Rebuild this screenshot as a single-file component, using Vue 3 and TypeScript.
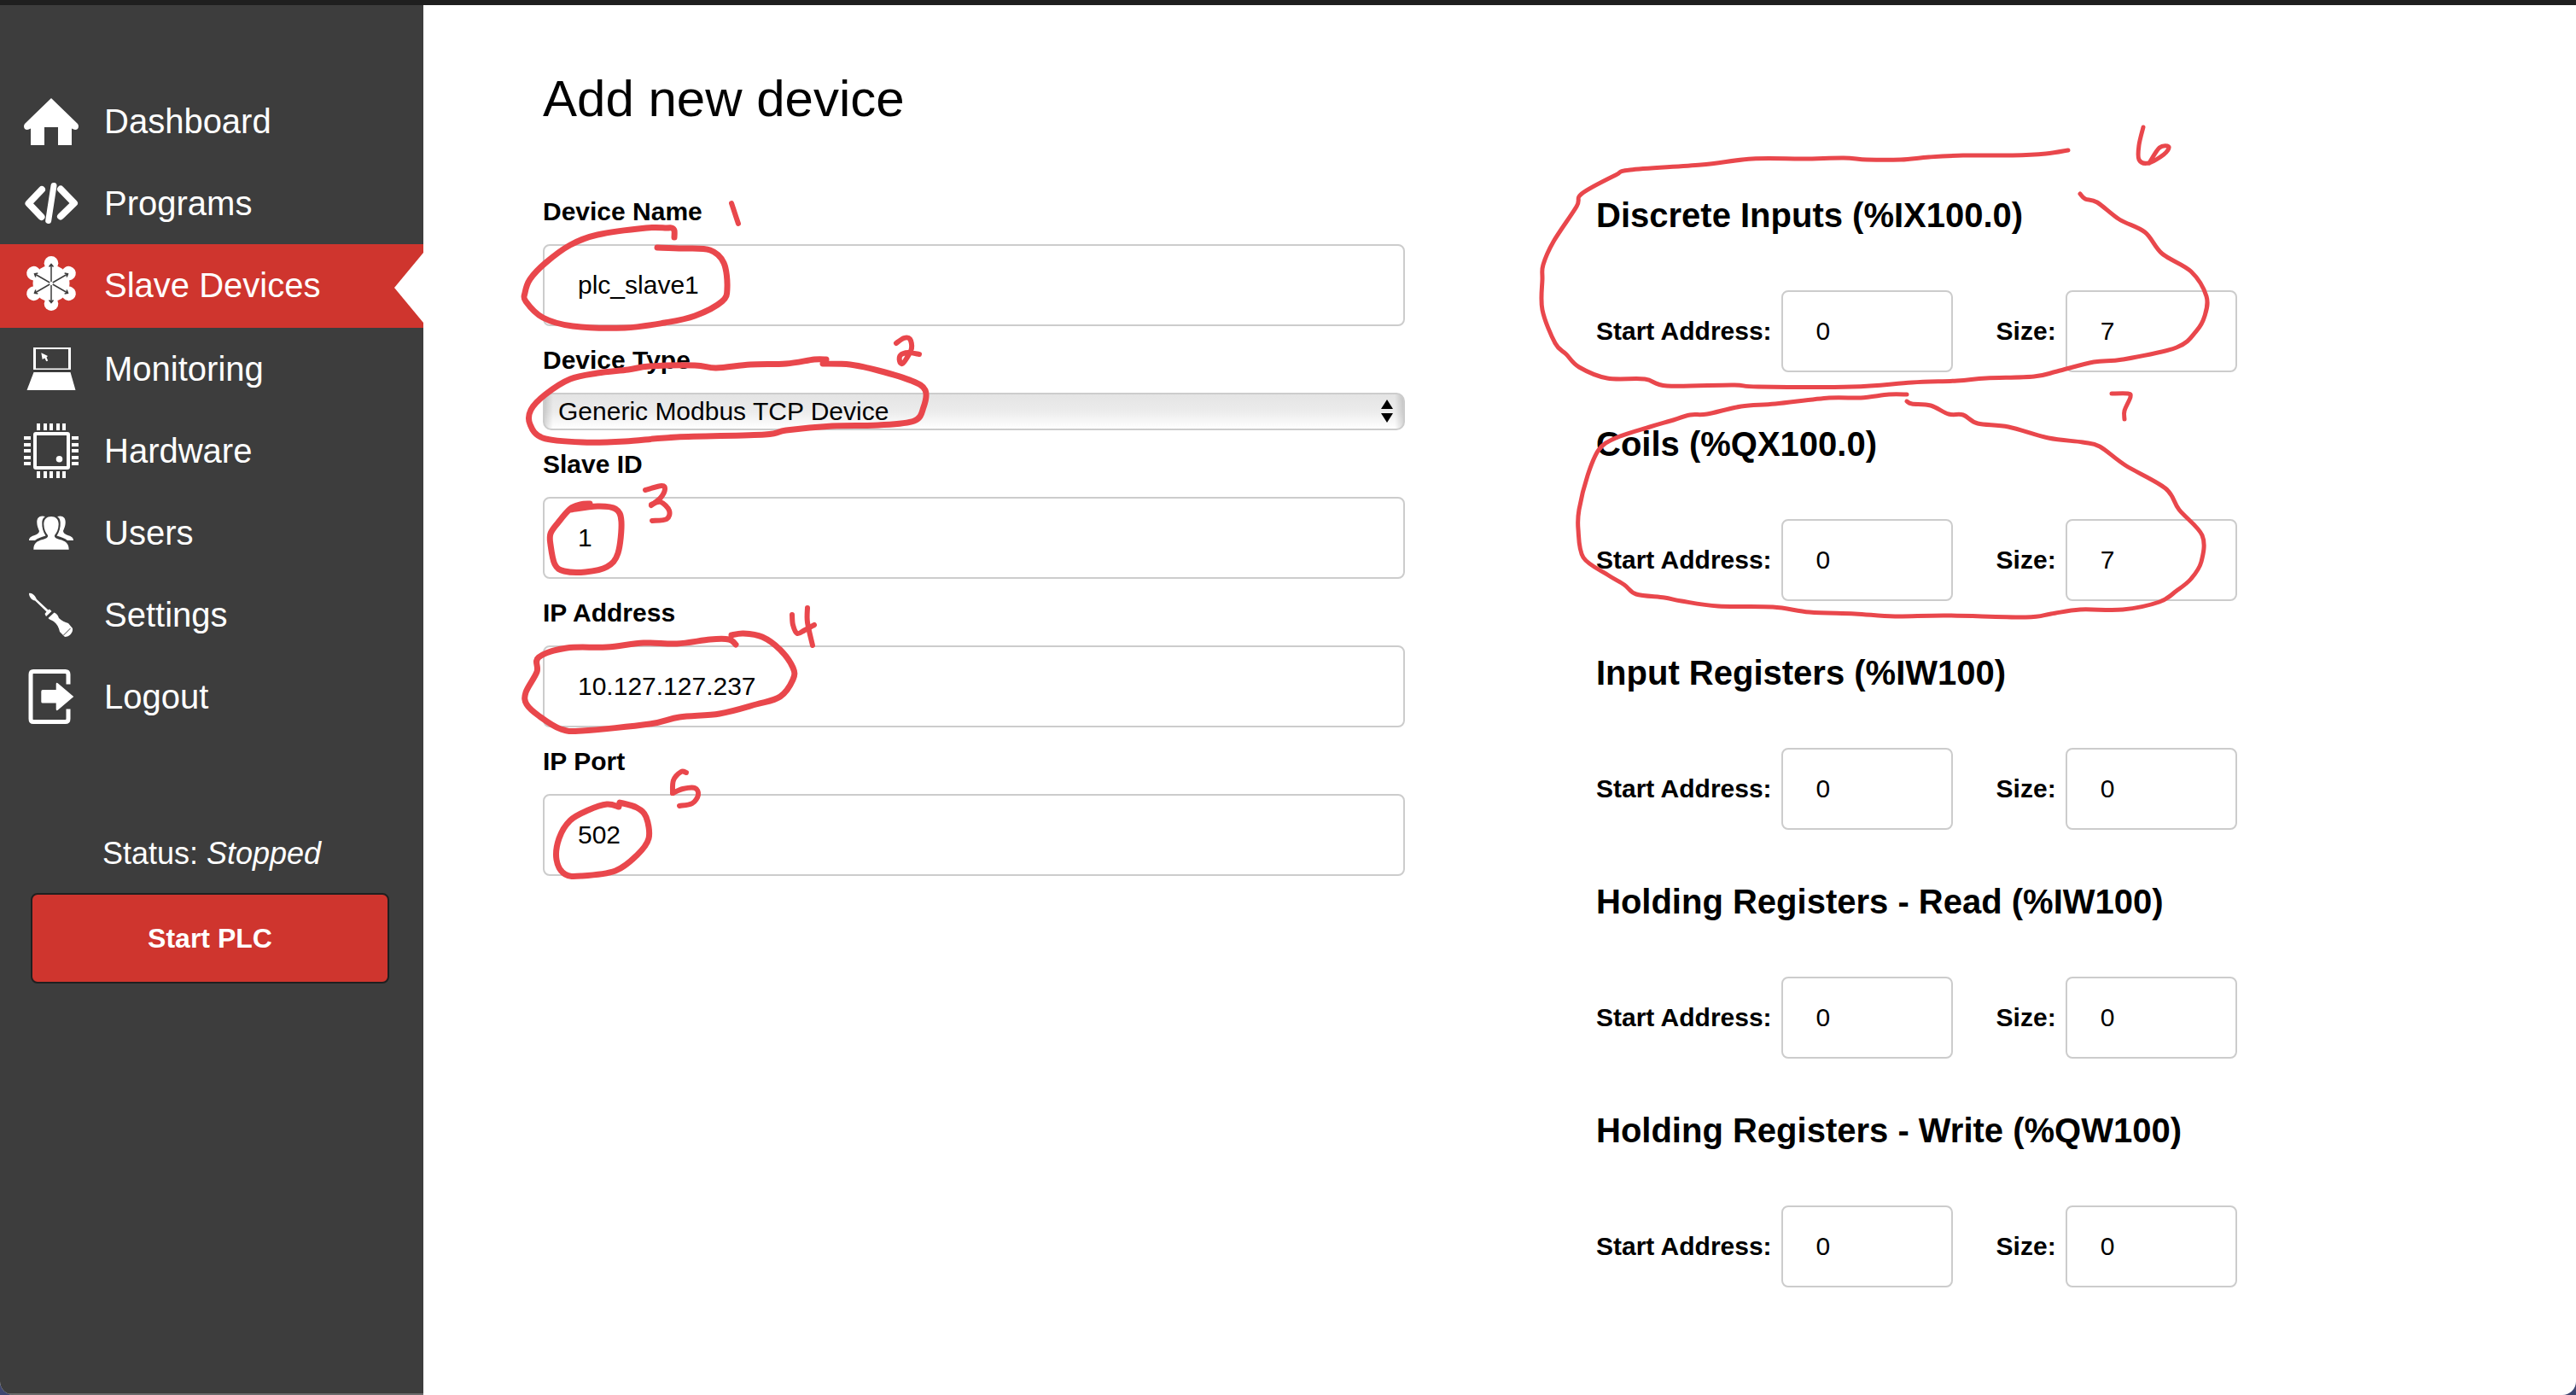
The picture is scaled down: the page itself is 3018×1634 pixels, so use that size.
<script setup lang="ts">
import { ref } from 'vue'

type Point = [number, number]

interface NavItem {
  icon: string
  label: string
}

interface RegisterBlock {
  id: string
  title: string
  start: string
  size: string
}

const navItems: NavItem[] = [
  { icon: 'home', label: 'Dashboard' },
  { icon: 'code', label: 'Programs' },
  { icon: 'hub', label: 'Slave Devices' },
  { icon: 'laptop', label: 'Monitoring' },
  { icon: 'chip', label: 'Hardware' },
  { icon: 'users', label: 'Users' },
  { icon: 'driver', label: 'Settings' },
  { icon: 'logout', label: 'Logout' },
]
const activeItem = 'Slave Devices'

const deviceName = ref('plc_slave1')
const deviceType = ref('Generic Modbus TCP Device')
const slaveId = ref('1')
const ipAddress = ref('10.127.127.237')
const ipPort = ref('502')

const registers = ref<RegisterBlock[]>([
  { id: 'di', title: 'Discrete Inputs (%IX100.0)', start: '0', size: '7' },
  { id: 'co', title: 'Coils (%QX100.0)', start: '0', size: '7' },
  { id: 'ir', title: 'Input Registers (%IW100)', start: '0', size: '0' },
  { id: 'hr', title: 'Holding Registers - Read (%IW100)', start: '0', size: '0' },
  { id: 'hw', title: 'Holding Registers - Write (%QW100)', start: '0', size: '0' },
])

const pinOffsets = [17, 25, 32, 40, 47]
const arrowAngles = [0, 60, 120, 180, 240, 300]

/** Turns pen samples into one smooth stroke (Catmull-Rom to cubic Bezier). */
function stroke(points: Point[]): string {
  let d = `M${points[0][0]} ${points[0][1]}`
  for (let i = 0; i < points.length - 1; i++) {
    const p0 = points[Math.max(i - 1, 0)]
    const p1 = points[i]
    const p2 = points[i + 1]
    const p3 = points[Math.min(i + 2, points.length - 1)]
    d += `C${p1[0] + (p2[0] - p0[0]) / 6} ${p1[1] + (p2[1] - p0[1]) / 6}`
    d += ` ${p2[0] - (p3[0] - p1[0]) / 6} ${p2[1] - (p3[1] - p1[1]) / 6}`
    d += ` ${p2[0]} ${p2[1]}`
  }
  return d
}

const fieldLoops: string[] = ([
  [[790, 278], [790, 270], [787, 267], [781, 267], [757, 267], [700, 275], [668, 287], [639, 308], [621, 327], [615, 343], [616, 353], [636, 372], [671, 382], [732, 384], [779, 378], [814, 370], [846, 353], [852, 337], [848, 308], [832, 293], [800, 291], [770, 290]],
  [[968, 421], [954, 421], [921, 426], [879, 427], [839, 431], [814, 428], [761, 429], [736, 433], [700, 437], [668, 444], [639, 462], [622, 480], [621, 497], [636, 513], [682, 518], [732, 517], [793, 512], [896, 509], [921, 504], [975, 499], [1029, 498], [1071, 493], [1082, 477], [1084, 457], [1068, 446], [1029, 434], [996, 427], [964, 426]],
  [[691, 590], [680, 591], [668, 596], [654, 612], [645, 625], [645, 638], [650, 661], [661, 669], [686, 670], [711, 664], [724, 648], [728, 611], [721, 596], [700, 593], [668, 597]],
  [[857, 744], [871, 742], [893, 746], [914, 761], [929, 782], [929, 796], [914, 816], [886, 825], [843, 836], [796, 840], [761, 848], [682, 856], [657, 854], [632, 839], [617, 825], [616, 811], [629, 787], [631, 770], [664, 759], [711, 758], [754, 753], [793, 754], [832, 749], [854, 749], [862, 755]],
  [[725, 945], [711, 942], [689, 949], [668, 961], [655, 982], [652, 1007], [662, 1024], [682, 1026], [721, 1020], [746, 1002], [760, 982], [757, 957], [746, 946], [726, 940]],
] as Point[][]).map(stroke)

const fieldMarks: string[] = ([
  [[857, 238], [861, 250], [865, 262]],
  [[1050, 402], [1059, 396], [1066, 397], [1068, 408], [1062, 420], [1057, 426], [1054, 423], [1055, 416], [1064, 413], [1077, 415]],
  [[756, 574], [775, 569], [779, 573], [774, 583], [763, 592]],
  [[763, 591], [774, 588], [784, 598], [781, 608], [764, 610]],
  [[928, 720], [929, 732], [934, 742], [943, 738], [954, 732]],
  [[946, 712], [946, 729], [952, 756]],
  [[804, 905], [798, 904], [789, 914], [788, 929]],
  [[788, 929], [800, 924], [814, 923], [818, 931], [811, 941], [796, 944]],
] as Point[][]).map(stroke)

const registerLoops: string[] = ([
  [[2423, 176], [2397, 180], [2358, 182], [2300, 182], [2260, 184], [2227, 187], [2187, 187], [2160, 185], [2113, 186], [2053, 186], [1993, 193], [1910, 199], [1893, 205], [1853, 227], [1847, 242], [1820, 283], [1808, 310], [1807, 327], [1807, 363], [1822, 402], [1835, 415], [1850, 430], [1883, 443], [1927, 444], [1953, 452], [2030, 451], [2060, 453], [2170, 453], [2240, 448], [2293, 446], [2327, 443], [2383, 441], [2410, 435], [2453, 424], [2487, 421], [2550, 407], [2573, 388], [2583, 370], [2585, 347], [2567, 318], [2533, 297], [2513, 272], [2483, 257], [2457, 237], [2443, 233], [2437, 227]],
  [[2234, 462], [2213, 462], [2180, 466], [2143, 466], [2080, 473], [2040, 476], [2000, 485], [1980, 486], [1957, 493], [1933, 500], [1893, 513], [1873, 527], [1860, 557], [1850, 597], [1849, 620], [1855, 653], [1883, 673], [1903, 685], [1917, 696], [1950, 700], [1970, 704], [2013, 710], [2077, 711], [2120, 717], [2173, 719], [2220, 722], [2280, 721], [2373, 723], [2403, 719], [2437, 714], [2487, 714], [2530, 705], [2550, 692], [2567, 678], [2579, 658], [2580, 627], [2553, 597], [2537, 572], [2490, 545], [2460, 523], [2440, 518], [2400, 513], [2353, 500], [2317, 496], [2300, 486], [2283, 485], [2262, 475], [2240, 473], [2234, 470]],
] as Point[][]).map(stroke)

const registerMarks: string[] = ([
  [[2511, 149], [2506, 170], [2506, 187], [2517, 191], [2535, 181], [2541, 172], [2530, 173], [2518, 191]],
  [[2474, 461], [2493, 461], [2496, 465], [2489, 481], [2489, 491]],
] as Point[][]).map(stroke)
</script>

<template>
  <div class="page">
    <aside class="sidebar">
      <nav class="nav">
        <a
          v-for="item in navItems"
          :key="item.label"
          href="#"
          class="nav-item"
          :class="{ active: item.label === activeItem }"
        >
          <svg class="nav-icon" viewBox="0 0 64 64" aria-hidden="true">
            <path
              v-if="item.icon === 'home'"
              fill="#fff"
              d="M32 5 63 35Q65 38 63 41Q60 43 56 40.500V60H40V39H24V60H8V40.500Q4 43 1 41Q-1 38 1 35Z"
            />
            <g v-else-if="item.icon === 'code'" class="line" stroke-width="8">
              <path d="M21 16 5.500 32.300 20.500 48" />
              <path stroke-width="7" d="M35 11.500 28.700 52.500" />
              <path d="M43 15.500 59 32 43 47.500" />
            </g>
            <g v-else-if="item.icon === 'hub'">
              <circle cx="32" cy="30" r="21.500" fill="#fff" />
              <g v-for="angle in arrowAngles" :key="angle" :transform="`rotate(${angle} 32 30)`">
                <circle cx="32" cy="6.300" r="8.300" fill="#fff" />
                <path d="M32 28V7M29.500 10.500 32 7.500 34.500 10.500" fill="none" stroke="#3d3d3d" stroke-width="1.500" />
              </g>
            </g>
            <g v-else-if="item.icon === 'laptop'" fill="#fff">
              <path fill-rule="evenodd" d="M11 7H55V33H11ZM14 9V31.500H52V9Z" />
              <path d="M11.500 36H54.500L60.500 57H3.500Z" />
              <path d="M20.300 13.300 28 17 26.500 18.500 28.200 22.500 26.300 23.300 24.300 19.500 21.700 21Z" />
            </g>
            <g v-else-if="item.icon === 'chip'" fill="#fff">
              <g v-for="pin in pinOffsets" :key="pin">
                <rect :x="pin - 2" y="0" width="4" height="8" />
                <rect :x="pin - 2" y="56" width="4" height="8" />
                <rect x="0" :y="pin - 2" width="8" height="4" />
                <rect x="56" :y="pin - 2" width="8" height="4" />
              </g>
              <rect x="13" y="12" width="39" height="40" rx="1" fill="none" stroke="#fff" stroke-width="4" />
              <circle cx="41.500" cy="41.700" r="3.800" />
            </g>
            <g v-else-if="item.icon === 'users'" fill="#fff">
              <path d="M11.300 51.700C11.300 44 16 41.500 22 40C26.500 38.500 28.500 37.500 28 35C25.500 32 23.500 28 23.300 22C23.300 16 27 13 32 13C37 13 40.700 16 40.700 22C40.500 28 38.500 32 36 35C35.500 37.500 37.500 38.500 42 40C48 41.500 52.700 44 52.700 51.700Z" />
              <path id="peer" d="M25 13C19 11 15 14 15.300 20C15.500 25 17 27 18 30C17.500 33 15 34 11 35.500C7 37 6 39 6 41H13C16 38.500 20 37.500 25.500 35.500C22.500 31 21 26 21.300 20C21.500 16 23 14.500 25 13Z" />
              <use href="#peer" transform="matrix(-1 0 0 1 64 0)" />
            </g>
            <g v-else-if="item.icon === 'driver'" fill="#fff">
              <path d="M6 7C9 6 13 9 15 14L28.500 26.500 30 25.500 32.500 28 26 34 24.500 31 26.500 28.500 13 15.500C9 15 6 11 6 7Z" />
              <path d="M35.500 29.500C39 31 40 33 41 36C44 39 48 41 52 42L57 48C58 53 53 58 48 58L42 52C41 47 39 43 35 40C32 38 30 38 28.500 36Z" />
              <path d="M46.500 56 54.500 48" fill="none" stroke="#3d3d3d" stroke-width="1" />
            </g>
            <g v-else>
              <path
                d="M52 17.500V6Q52 2.500 48.500 2.500H11Q8 2.500 8 6V58Q8 61.500 11 61.500H48.500Q52 61.500 52 58V46.500"
                fill="none"
                stroke="#fff"
                stroke-width="5"
              />
              <path fill="#fff" d="M22 24H37.700V17Q38 15 40 16.500L58.300 32 40 47.500Q38 49 37.700 47V39.500H22Q20.300 39.500 20.300 38V26Q20.300 24 22 24Z" />
            </g>
          </svg>
          <span>{{ item.label }}</span>
        </a>
      </nav>
      <p class="status">Status: <i>Stopped</i></p>
      <button type="button" class="start">Start PLC</button>
    </aside>

    <main class="main">
      <h1>Add new device</h1>
      <form class="columns" @submit.prevent>
        <section class="device">
          <label for="device-name">Device Name</label>
          <input id="device-name" v-model="deviceName" type="text" />

          <label for="device-type">Device Type</label>
          <div class="select">
            <select id="device-type" v-model="deviceType">
              <option>Generic Modbus TCP Device</option>
            </select>
            <svg class="arrows" viewBox="0 0 14 28" aria-hidden="true">
              <path d="M7 0 14 11H0ZM0 16H14L7 27Z" />
            </svg>
          </div>

          <label for="slave-id">Slave ID</label>
          <input id="slave-id" v-model="slaveId" type="text" />

          <label for="ip-address">IP Address</label>
          <input id="ip-address" v-model="ipAddress" type="text" />

          <label for="ip-port">IP Port</label>
          <input id="ip-port" v-model="ipPort" type="text" />

          <svg class="ink" viewBox="636 228 500 820" width="500" height="820" aria-hidden="true">
            <path v-for="(d, i) in fieldLoops" :key="`loop-${i}`" :d="d" stroke-width="7" />
            <path v-for="(d, i) in fieldMarks" :key="`mark-${i}`" :d="d" stroke-width="6" />
          </svg>
        </section>

        <section class="registers">
          <div v-for="block in registers" :key="block.id" class="register">
            <h2>{{ block.title }}</h2>
            <div class="pair">
              <label :for="`${block.id}-start`">Start Address:</label>
              <input :id="`${block.id}-start`" v-model="block.start" type="text" />
              <label :for="`${block.id}-size`" class="size">Size:</label>
              <input :id="`${block.id}-size`" v-model="block.size" type="text" />
            </div>
          </div>

          <svg class="ink" viewBox="1870 228 760 520" width="760" height="520" aria-hidden="true">
            <path v-for="(d, i) in registerLoops" :key="`loop-${i}`" :d="d" stroke-width="5" />
            <path v-for="(d, i) in registerMarks" :key="`mark-${i}`" :d="d" stroke-width="5" />
          </svg>
        </section>
      </form>
    </main>
  </div>
</template>

<style>
html {
  background: #3f4670;
}

body {
  margin: 0;
}
</style>

<style scoped>
.page {
  display: flex;
  box-sizing: border-box;
  min-height: 100vh;
  overflow: hidden;
  border-top: 6px solid #1f1f1f;
  border-radius: 0 0 16px 16px;
  background: #fff;
  font-family: "Liberation Sans", Arial, Helvetica, sans-serif;
  color: #000;
}

.sidebar {
  flex: none;
  box-sizing: border-box;
  width: 496px;
  padding-top: 88px;
  background: #3d3d3d;
  border-bottom: 2px solid #6b6b6b;
  color: #fff;
}

.nav-item {
  display: flex;
  align-items: center;
  gap: 30px;
  height: 96px;
  padding-left: 28px;
  color: #fff;
  font-size: 40px;
  line-height: 96px;
  text-decoration: none;
}

.nav-item.active {
  position: relative;
  padding-bottom: 2px;
  background: #cf352e;
}

.nav-item.active::after {
  content: "";
  position: absolute;
  top: 10px;
  right: 0;
  border: solid transparent;
  border-width: 41px 34px 41px 0;
  border-right-color: #fff;
}

.nav-icon {
  flex: none;
  width: 64px;
  height: 64px;
  overflow: visible;
}

.line {
  fill: none;
  stroke: #fff;
  stroke-linecap: round;
  stroke-linejoin: round;
}

.status {
  margin: 116px 0 26px;
  font-size: 36px;
  line-height: 40px;
  text-align: center;
}

.start {
  display: block;
  box-sizing: border-box;
  width: 420px;
  height: 106px;
  margin-left: 36px;
  padding: 0;
  border: 2px solid #1f1f1f;
  border-radius: 8px;
  background: #cf352e;
  color: #fff;
  font: bold 32px "Liberation Sans", Arial, Helvetica, sans-serif;
}

.main {
  flex: 1;
  min-width: 0;
  padding: 74px 0 60px 140px;
}

h1 {
  margin: 0 0 76px;
  font-size: 60px;
  font-weight: normal;
  line-height: 72px;
}

.columns {
  display: grid;
  grid-template-columns: minmax(0, 1010fr) minmax(0, 1148fr);
  gap: 224px;
}

.device,
.registers {
  position: relative;
}

.device {
  padding-top: 2px;
}

label {
  font-size: 30px;
  font-weight: bold;
  line-height: 36px;
}

.device label {
  display: block;
  margin-bottom: 20px;
}

input,
select {
  display: block;
  box-sizing: border-box;
  width: 100%;
  border: 2px solid #ccc;
  border-radius: 8px;
  color: #000;
  font: 30px "Liberation Sans", Arial, Helvetica, sans-serif;
}

input {
  height: 96px;
  padding: 0 39px;
  background: #fff;
}

.device input,
.select {
  margin-bottom: 22px;
}

.select {
  position: relative;
}

select {
  appearance: none;
  height: 44px;
  padding: 0 60px 2px 16px;
  border-radius: 10px;
  background:
    linear-gradient(to right, rgba(0, 0, 0, 0.14), transparent 10px, transparent calc(100% - 10px), rgba(0, 0, 0, 0.14)),
    linear-gradient(#e4e4e4, #ececec 50%, #fff);
}

.arrows {
  position: absolute;
  top: 8px;
  right: 14px;
  width: 14px;
  height: 28px;
  pointer-events: none;
}

.register {
  margin-bottom: 60px;
}

.register:last-of-type {
  margin-bottom: 0;
}

h2 {
  margin: 0 0 64px;
  font-size: 40px;
  font-weight: bold;
  line-height: 48px;
}

.pair {
  display: flex;
  align-items: center;
  gap: 11px;
}

.pair input {
  flex: none;
  width: 201px;
}

.size {
  margin-left: 40px;
}

.ink {
  position: absolute;
  top: 0;
  left: 0;
  overflow: visible;
  fill: none;
  stroke: #e9474c;
  stroke-linecap: round;
  stroke-linejoin: round;
  pointer-events: none;
}
</style>
